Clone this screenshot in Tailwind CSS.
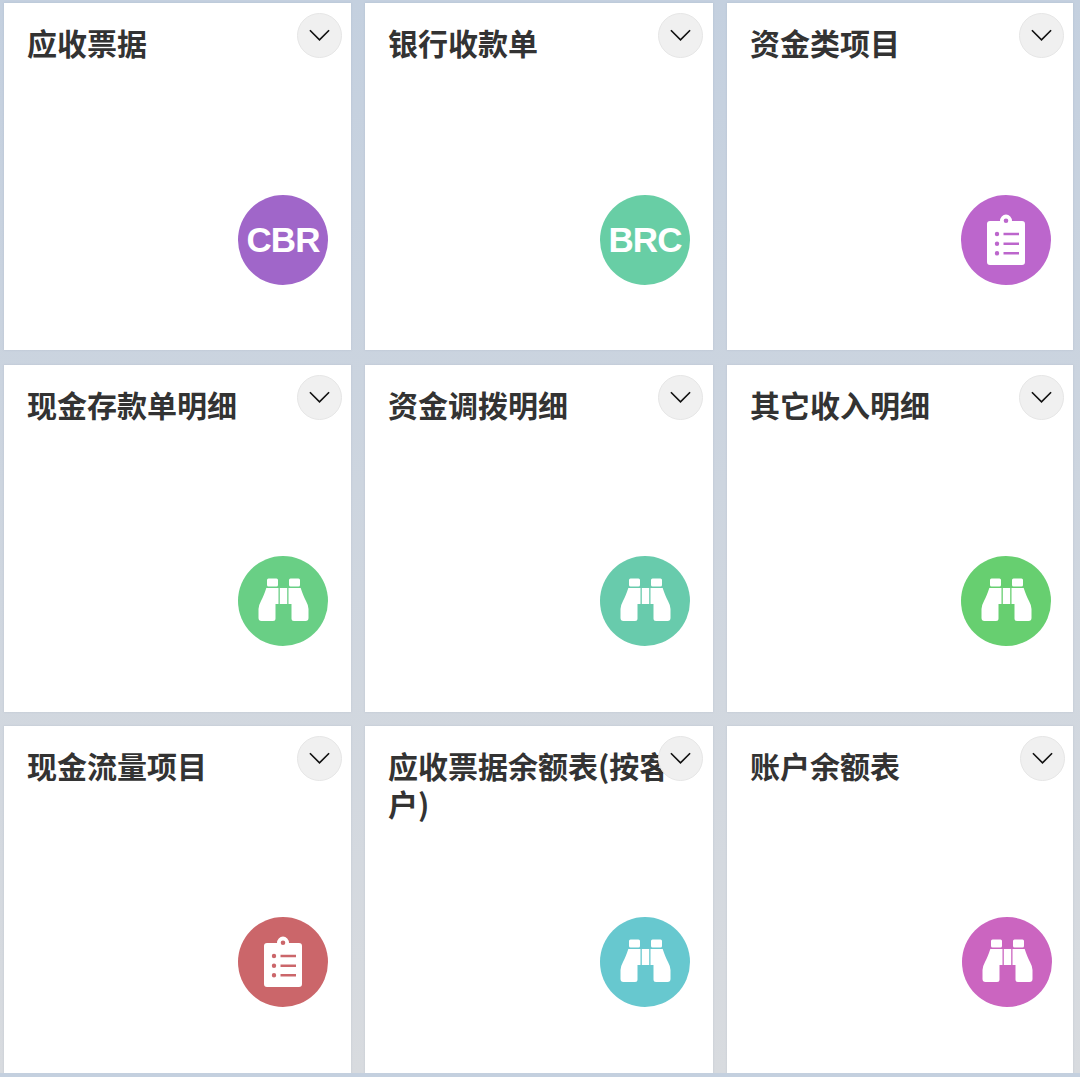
<!DOCTYPE html>
<html lang="zh-CN">
<head>
    <meta charset="UTF-8">
    <title>报表</title>
    <script src="https://cdn.jsdelivr.net/npm/@tailwindcss/browser@4"></script>
</head>
<body class="bg-gradient-to-b from-[#c4d0df] to-[#d8dbdf] font-['Noto_Sans_CJK_SC',sans-serif]">

<!-- Icons -->
<svg class="hidden">
    <symbol id="chevron" viewBox="0 0 24 14">
        <path d="M2 2l10 10L22 2" fill="none" stroke="#111" stroke-width="1.7"/>
    </symbol>
    <symbol id="clipboard" viewBox="0 0 90 90">
        <path fill="#fff" fill-rule="evenodd" d="M29 26h10a6 6.500 0 0 1 12 0h10a3 3 0 0 1 3 3v38a3 3 0 0 1-3 3H29a3 3 0 0 1-3-3V29a3 3 0 0 1 3-3zM45 23.500a2.300 2.300 0 1 0 0 4.600a2.300 2.300 0 0 0 0-4.600zM36 36.800a2.200 2.200 0 1 0 0 4.400a2.200 2.200 0 0 0 0-4.400zM42.500 37.700v2.600h15.500v-2.600zM36 46.500a2.200 2.200 0 1 0 0 4.400a2.200 2.200 0 0 0 0-4.400zM42.500 47.400v2.600h15.500v-2.600zM36 56.100a2.200 2.200 0 1 0 0 4.400a2.200 2.200 0 0 0 0-4.400zM42.500 57v2.600h15.500v-2.600z"/>
    </symbol>
    <symbol id="binoculars" viewBox="0 0 90 90">
        <g fill="#fff">
            <rect x="29" y="22.500" width="11" height="8" rx="1.500"/>
            <rect x="51" y="22.500" width="11" height="8" rx="1.500"/>
            <path d="M28.500 32H40.500V48h-3v14.500a2.500 2.500 0 0 1-2.500 2.500H23.500a3 3 0 0 1-3-3v-9q0-3.500 2.500-8t5.500-13.500z"/>
            <path d="M62.500 32H50.500V48h3v14.500a2.500 2.500 0 0 0 2.500 2.500h11.500a3 3 0 0 0 3-3v-9q0-3.500-2.500-8t-5.500-13.500z"/>
            <rect x="41.800" y="32" width="7.400" height="16"/>
        </g>
    </symbol>
</svg>

<!-- Report cards -->
<main class="grid grid-cols-[347px_348px_346px] auto-rows-[347px] gap-x-[14px] gap-y-[14.5px] pt-[3px] pl-[4px]">

    <div class="relative flex flex-col bg-white shadow-[0_0_2px_rgba(110,125,150,0.2)] px-[23px] pt-[20px] pb-[65px]">
        <h3 class="text-[30px] leading-[38px] font-bold text-[#333]">应收票据</h3>
        <button class="absolute top-[10px] right-[9px] flex items-center justify-center w-[45px] h-[45px] pb-[1px] rounded-full bg-[#f0f0f0] border border-[#e6e6e6]"><svg class="w-[23px] h-[14px]"><use href="#chevron"/></svg></button>
        <div class="mt-auto self-end flex items-center justify-center w-[90px] h-[90px] rounded-full bg-[#a066c9] font-['Liberation_Sans',sans-serif] text-[35px] tracking-[-1px] font-bold text-white">CBR</div>
    </div>

    <div class="relative flex flex-col bg-white shadow-[0_0_2px_rgba(110,125,150,0.2)] px-[23px] pt-[20px] pb-[65px]">
        <h3 class="text-[30px] leading-[38px] font-bold text-[#333]">银行收款单</h3>
        <button class="absolute top-[10px] right-[10px] flex items-center justify-center w-[45px] h-[45px] pb-[1px] rounded-full bg-[#f0f0f0] border border-[#e6e6e6]"><svg class="w-[23px] h-[14px]"><use href="#chevron"/></svg></button>
        <div class="mt-auto self-end flex items-center justify-center w-[90px] h-[90px] rounded-full bg-[#68cea5] font-['Liberation_Sans',sans-serif] text-[35px] tracking-[-1px] font-bold text-white">BRC</div>
    </div>

    <div class="relative flex flex-col bg-white shadow-[0_0_2px_rgba(110,125,150,0.2)] pl-[23px] pr-[22px] pt-[20px] pb-[65px]">
        <h3 class="text-[30px] leading-[38px] font-bold text-[#333]">资金类项目</h3>
        <button class="absolute top-[10px] right-[9px] flex items-center justify-center w-[45px] h-[45px] pb-[1px] rounded-full bg-[#f0f0f0] border border-[#e6e6e6]"><svg class="w-[23px] h-[14px]"><use href="#chevron"/></svg></button>
        <div class="mt-auto self-end w-[90px] h-[90px] rounded-full bg-[#bc66cc]"><svg class="w-[90px] h-[90px]"><use href="#clipboard"/></svg></div>
    </div>

    <div class="relative flex flex-col bg-white shadow-[0_0_2px_rgba(110,125,150,0.2)] px-[23px] pt-[20px] pb-[66px]">
        <h3 class="text-[30px] leading-[38px] font-bold text-[#333]">现金存款单明细</h3>
        <button class="absolute top-[10px] right-[9px] flex items-center justify-center w-[45px] h-[45px] pb-[1px] rounded-full bg-[#f0f0f0] border border-[#e6e6e6]"><svg class="w-[23px] h-[14px]"><use href="#chevron"/></svg></button>
        <div class="mt-auto self-end w-[90px] h-[90px] rounded-full bg-[#69cf85]"><svg class="w-[90px] h-[90px]"><use href="#binoculars"/></svg></div>
    </div>

    <div class="relative flex flex-col bg-white shadow-[0_0_2px_rgba(110,125,150,0.2)] px-[23px] pt-[20px] pb-[66px]">
        <h3 class="text-[30px] leading-[38px] font-bold text-[#333]">资金调拨明细</h3>
        <button class="absolute top-[10px] right-[10px] flex items-center justify-center w-[45px] h-[45px] pb-[1px] rounded-full bg-[#f0f0f0] border border-[#e6e6e6]"><svg class="w-[23px] h-[14px]"><use href="#chevron"/></svg></button>
        <div class="mt-auto self-end w-[90px] h-[90px] rounded-full bg-[#68cbac]"><svg class="w-[90px] h-[90px]"><use href="#binoculars"/></svg></div>
    </div>

    <div class="relative flex flex-col bg-white shadow-[0_0_2px_rgba(110,125,150,0.2)] pl-[23px] pr-[22px] pt-[20px] pb-[66px]">
        <h3 class="text-[30px] leading-[38px] font-bold text-[#333]">其它收入明细</h3>
        <button class="absolute top-[10px] right-[9px] flex items-center justify-center w-[45px] h-[45px] pb-[1px] rounded-full bg-[#f0f0f0] border border-[#e6e6e6]"><svg class="w-[23px] h-[14px]"><use href="#chevron"/></svg></button>
        <div class="mt-auto self-end w-[90px] h-[90px] rounded-full bg-[#67cf70]"><svg class="w-[90px] h-[90px]"><use href="#binoculars"/></svg></div>
    </div>

    <div class="relative flex flex-col bg-white shadow-[0_0_2px_rgba(110,125,150,0.2)] px-[23px] pt-[20px] pb-[66px]">
        <h3 class="text-[30px] leading-[38px] font-bold text-[#333]">现金流量项目</h3>
        <button class="absolute top-[10px] right-[9px] flex items-center justify-center w-[45px] h-[45px] pb-[1px] rounded-full bg-[#f0f0f0] border border-[#e6e6e6]"><svg class="w-[23px] h-[14px]"><use href="#chevron"/></svg></button>
        <div class="mt-auto self-end w-[90px] h-[90px] rounded-full bg-[#cb666a]"><svg class="w-[90px] h-[90px]"><use href="#clipboard"/></svg></div>
    </div>

    <div class="relative flex flex-col bg-white shadow-[0_0_2px_rgba(110,125,150,0.2)] px-[23px] pt-[20px] pb-[66px]">
        <h3 class="text-[30px] leading-[38px] font-bold text-[#333]">应收票据余额表(按客户)</h3>
        <button class="absolute top-[10px] right-[10px] flex items-center justify-center w-[45px] h-[45px] pb-[1px] rounded-full bg-[#f0f0f0] border border-[#e6e6e6]"><svg class="w-[23px] h-[14px]"><use href="#chevron"/></svg></button>
        <div class="mt-auto self-end w-[90px] h-[90px] rounded-full bg-[#67c8cf]"><svg class="w-[90px] h-[90px]"><use href="#binoculars"/></svg></div>
    </div>

    <div class="relative flex flex-col bg-white shadow-[0_0_2px_rgba(110,125,150,0.2)] pl-[23px] pr-[21px] pt-[20px] pb-[66px]">
        <h3 class="text-[30px] leading-[38px] font-bold text-[#333]">账户余额表</h3>
        <button class="absolute top-[10px] right-[8px] flex items-center justify-center w-[45px] h-[45px] pb-[1px] rounded-full bg-[#f0f0f0] border border-[#e6e6e6]"><svg class="w-[23px] h-[14px]"><use href="#chevron"/></svg></button>
        <div class="mt-auto self-end w-[90px] h-[90px] rounded-full bg-[#cb65c0]"><svg class="w-[90px] h-[90px]"><use href="#binoculars"/></svg></div>
    </div>

</main>

</body>
</html>
